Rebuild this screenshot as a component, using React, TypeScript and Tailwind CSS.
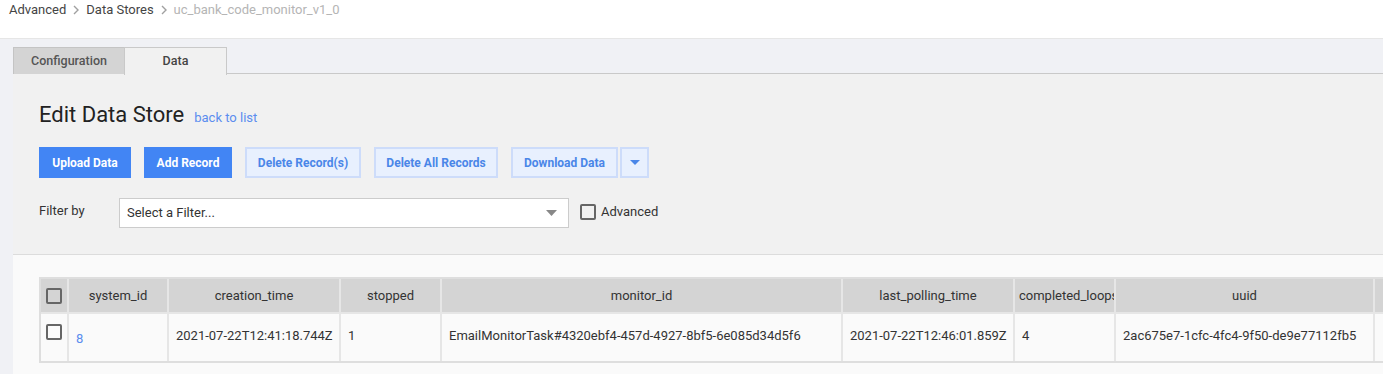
import React from "react";

const Chevron = () => (
  <svg width="8" height="12" viewBox="0 0 8 12" className="mx-[6px] block">
    <path d="M2 2 L6 6 L2 10" fill="none" stroke="#a0a0a0" strokeWidth="1.4" />
  </svg>
);

const Check = () => (
  <span className="inline-block w-[16px] h-[16px] border-2 border-[#666] rounded-[2px] bg-transparent" />
);

const cols: { name: string; w: number }[] = [
  { name: "system_id", w: 100 },
  { name: "creation_time", w: 172 },
  { name: "stopped", w: 101 },
  { name: "monitor_id", w: 401 },
  { name: "last_polling_time", w: 172 },
  { name: "completed_loops", w: 101 },
  { name: "uuid", w: 259 },
  { name: "", w: 40 },
];

const row = [
  "8",
  "2021-07-22T12:41:18.744Z",
  "1",
  "EmailMonitorTask#4320ebf4-457d-4927-8bf5-6e085d34d5f6",
  "2021-07-22T12:46:01.859Z",
  "4",
  "2ac675e7-1cfc-4fc4-9f50-de9e77112fb5",
  "",
];

export default function App() {
  return (
    <div className="w-[1383px] h-[374px] overflow-hidden bg-white text-[#333]" style={{ fontFamily: "Roboto, 'Liberation Sans', sans-serif" }}>
      {/* breadcrumb */}
      <div className="h-[39px] border-b border-[#e6e6e6] flex items-center pl-[9px] pb-[18px] text-[13px] leading-[18px]">
        <span className="text-[#444]">Advanced</span>
        <Chevron />
        <span className="text-[#444]">Data Stores</span>
        <Chevron />
        <span className="text-[#b5b5b5]">uc_bank_code_monitor_v1_0</span>
      </div>
      <div className="bg-[#f0f1f5] pl-[13px] pt-[8px] h-[335px]">
        {/* tabs */}
        <div className="flex h-[27px] border-b border-[#c9c9c9]">
          <div className="w-[111px] bg-[#d4d4d4] border-t border-l border-[#c4c4c4] flex items-center justify-center text-[12.5px] font-medium text-[#555] h-[27px]">
            Configuration
          </div>
          <div className="w-[103px] bg-[#f1f1f1] border-t border-l border-r border-[#c9c9c9] flex items-center justify-center text-[12.5px] font-medium text-[#444] h-[28px] -mb-[1px]">
            Data
          </div>
        </div>
        {/* panel */}
        <div className="bg-[#f1f1f1] h-[181px] border-b border-[#dcdcdc] pl-[26px] pt-[27px]">
          <div className="flex items-baseline">
            <h1 className="text-[22px] text-[#222] leading-[27px]">Edit Data Store</h1>
            <a className="ml-[10px] text-[13px] text-[#5b8def]">back to list</a>
          </div>
          <div className="flex mt-[19px] gap-[13px] text-[12px] font-bold">
            <button className="w-[92px] h-[31px] bg-[#4285f4] text-white">Upload Data</button>
            <button className="w-[88px] h-[31px] bg-[#4285f4] text-white">Add Record</button>
            <button className="w-[116px] h-[31px] bg-[#e8f0fe] border-2 border-[#cddcfa] text-[#4a86e8]">Delete Record(s)</button>
            <button className="w-[124px] h-[31px] bg-[#e8f0fe] border-2 border-[#cddcfa] text-[#4a86e8]">Delete All Records</button>
            <div className="flex gap-[2px]">
              <button className="w-[107px] h-[31px] bg-[#e8f0fe] border-2 border-[#cddcfa] text-[#4a86e8]">Download Data</button>
              <button className="w-[29px] h-[31px] bg-[#e8f0fe] border-2 border-[#cddcfa] flex items-center justify-center">
                <svg width="10" height="6" viewBox="0 0 10 6"><path d="M0 0 L10 0 L5 5 Z" fill="#4a86e8" /></svg>
              </button>
            </div>
          </div>
          <div className="flex items-center mt-[20px] text-[13px]">
            <span className="w-[80px] text-[#333] -mt-[4px]">Filter by</span>
            <div className="w-[450px] h-[30px] bg-white border border-[#ccc] flex items-center justify-between pl-[7px] pr-[11px]">
              <span className="text-[#333]">Select a Filter...</span>
              <svg width="11" height="6" viewBox="0 0 11 6"><path d="M0 0 L11 0 L5.5 6 Z" fill="#888" /></svg>
            </div>
            <span className="ml-[11px] -mt-[3px] flex items-center gap-[5px]">
              <Check />
              <span className="text-[#333]">Advanced</span>
            </span>
          </div>
        </div>
        {/* lower */}
        <div className="bg-[#fafafa] h-[130px] pl-[26px] pt-[22px]">
          <div className="border-2 border-[#dedede] border-r-0 w-max">
            <div className="flex bg-[#d4d4d4] h-[33px] text-[13px] text-[#333]">
              <div className="w-[26px] flex items-center justify-center">
                <Check />
              </div>
              {cols.map((c, i) => (
                <div key={i} className="border-l-2 border-[#e6e6e6] flex items-center justify-center overflow-hidden whitespace-nowrap" style={{ width: c.w }}>
                  <span className={c.name === "completed_loops" ? "pl-[4px] w-full" : ""}>{c.name}</span>
                </div>
              ))}
            </div>
            <div className="flex h-[49px] bg-[#fafafa] text-[13px] border-t-2 border-[#e6e6e6]">
              <div className="w-[26px] flex justify-center pt-[10px]">
                <Check />
              </div>
              {row.map((v, i) => (
                <div key={i} className="border-l-2 border-[#e6e6e6] pl-[7px] pt-[12px] overflow-hidden whitespace-nowrap" style={{ width: cols[i].w }}>
                  <span className={i === 0 ? "text-[#5b8def] relative top-[3px]" : "text-[#333]"}>{v}</span>
                </div>
              ))}
            </div>
          </div>
        </div>
      </div>
    </div>
  );
}
